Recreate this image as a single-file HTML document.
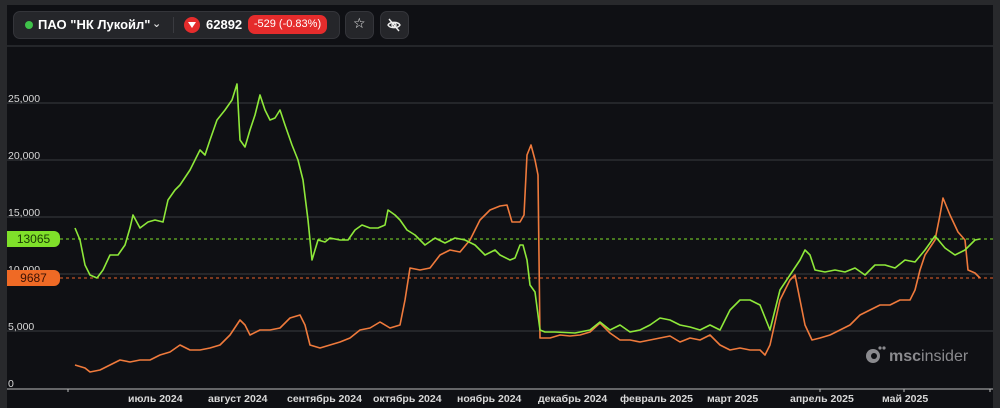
<!DOCTYPE html>
<html><head><meta charset="utf-8"><style>
html,body{margin:0;padding:0;background:#28292c;width:1000px;height:408px;overflow:hidden;font-family:"Liberation Sans","DejaVu Sans",sans-serif}
.panel{position:absolute;left:7px;top:5px;width:986px;height:403px;background:#0f1014}
.tb{position:absolute;top:11px;height:28px;background:#25262a;border:1px solid #34353a;border-radius:7px;box-sizing:border-box}
.lbl{position:absolute;left:7px;width:53px;height:16px;border-radius:0 6px 6px 0;font-size:12px;text-align:center;line-height:16px}
.ax{position:absolute;color:#d8d8d8;font-size:10.5px;font-weight:bold;top:393px}
.yl{position:absolute;left:8px;color:#d8d8d8;font-size:10.5px}
</style></head><body>
<div class="panel"></div>
<svg style="position:absolute;left:0;top:0" width="1000" height="408">
<g stroke="#2c2d31" stroke-width="1.5">
<line x1="7" x2="993" y1="46" y2="46"/><line x1="7" x2="993" y1="103" y2="103"/><line x1="7" x2="993" y1="160" y2="160"/><line x1="7" x2="993" y1="217" y2="217"/><line x1="7" x2="993" y1="274" y2="274"/><line x1="7" x2="993" y1="331" y2="331"/>
</g>
<line x1="7" x2="993" y1="389" y2="389" stroke="#bbb" stroke-width="1"/>
<g stroke="#bbb"><line x1="68" x2="68" y1="389" y2="392"/><line x1="990" x2="990" y1="389" y2="392"/><line x1="904" x2="904" y1="389" y2="392"/><line x1="820" x2="820" y1="389" y2="392"/></g>
<line x1="60" x2="993" y1="239" y2="239" stroke="#7fe02a" stroke-dasharray="3,3"/>
<line x1="60" x2="993" y1="278" y2="278" stroke="#e8622a" stroke-dasharray="3,3"/>
<polyline fill="none" stroke="#ef7a3c" stroke-width="1.6" stroke-linejoin="round" points="75,365 85,368 90,372 100,370 110,365 120,360 130,362 140,360 150,360 160,355 170,352 180,345 190,350 200,350 210,348 220,345 230,335 240,320 245,325 250,335 260,330 270,330 280,328 290,318 300,315 305,325 310,345 320,348 330,345 340,342 350,338 360,330 370,328 380,322 390,328 400,325 405,300 410,268 420,270 430,268 440,255 450,250 460,252 470,240 480,220 490,210 500,206 507,205 512,222 520,222 524,215 527,155 531,145 535,160 538,175 540,338 550,338 560,335 570,336 580,335 590,332 600,323 610,333 620,340 630,340 640,342 650,340 660,338 670,336 680,342 690,338 700,340 710,335 720,345 730,350 740,348 750,350 760,350 765,355 770,345 780,300 790,280 795,275 800,300 805,325 812,340 820,338 830,335 840,330 850,325 860,315 870,310 880,305 890,305 900,300 910,300 915,290 920,270 925,255 935,240 940,215 943,198 950,215 958,232 965,240 968,270 975,273 980,278"/>
<polyline fill="none" stroke="#8ee83a" stroke-width="1.6" stroke-linejoin="round" points="75,228 80,240 85,265 90,275 97,278 103,270 110,255 118,255 125,245 130,228 133,215 140,228 148,222 155,220 163,222 168,200 175,190 180,185 190,170 195,160 200,150 205,155 210,140 217,120 225,110 232,100 237,84 240,140 245,147 250,130 255,115 260,95 265,110 270,120 275,118 280,110 285,125 292,145 298,160 303,180 308,220 312,260 318,240 325,242 330,238 340,240 348,240 355,230 362,225 370,228 378,228 385,225 388,210 395,215 400,220 407,230 415,235 425,245 435,238 445,243 455,238 465,240 475,245 485,255 495,250 500,255 510,260 515,258 520,245 523,245 527,260 530,285 535,292 540,330 545,332 555,332 575,333 590,330 600,322 610,330 620,325 630,332 640,330 650,325 660,318 670,320 680,325 690,327 700,330 710,325 720,330 730,310 740,300 750,300 760,305 770,330 775,310 780,290 790,275 800,260 805,250 810,255 815,270 825,272 835,270 845,272 855,268 865,275 875,265 885,265 895,268 905,260 915,262 925,250 935,236 945,248 955,255 965,250 975,240 980,239"/>
<g fill="#8a8a8e"><circle cx="873" cy="356" r="7"/><circle cx="880" cy="348" r="1.6"/><circle cx="884" cy="348" r="1.6"/></g>
<circle cx="874" cy="356" r="3" fill="#0f1014"/>
<text x="889" y="361" fill="#8a8a8e" font-size="16" font-family="Liberation Sans"><tspan font-weight="bold">msc</tspan>insider</text>
</svg>
<div class="yl" style="top:93px">25,000</div>
<div class="yl" style="top:150px">20,000</div>
<div class="yl" style="top:207px">15,000</div>
<div class="yl" style="top:264px">10,000</div>
<div class="yl" style="top:321px">5,000</div>
<div class="yl" style="top:378px">0</div>
<div class="lbl" style="top:231px;background:#7fe02a;color:#1a3a05">13065</div>
<div class="lbl" style="top:270px;background:#ef6a25;color:#3a1205">9687</div>
<div class="ax" style="left:128px">июль 2024</div>
<div class="ax" style="left:208px">август 2024</div>
<div class="ax" style="left:287px">сентябрь 2024</div>
<div class="ax" style="left:373px">октябрь 2024</div>
<div class="ax" style="left:457px">ноябрь 2024</div>
<div class="ax" style="left:538px">декабрь 2024</div>
<div class="ax" style="left:620px">февраль 2025</div>
<div class="ax" style="left:707px">март 2025</div>
<div class="ax" style="left:790px">апрель 2025</div>
<div class="ax" style="left:882px">май 2025</div>
<div class="tb" style="left:13px;width:327px"></div>
<div style="position:absolute;left:25px;top:21px;width:8px;height:8px;border-radius:50%;background:#3fc24a"></div>
<div style="position:absolute;left:38px;top:17px;color:#fff;font-size:13px;font-weight:bold">ПАО "НК Лукойл"</div>
<div style="position:absolute;left:152px;top:17px;color:#ddd;font-size:11px;font-weight:bold">⌄</div>
<div style="position:absolute;left:173px;top:17px;width:1px;height:16px;background:#3a3b40"></div>
<div style="position:absolute;left:184px;top:17px;width:16px;height:16px;border-radius:50%;background:#e52c2c"></div>
<div style="position:absolute;left:188px;top:22px;width:0;height:0;border-left:4px solid transparent;border-right:4px solid transparent;border-top:6px solid #fff"></div>
<div style="position:absolute;left:206px;top:17px;color:#fff;font-size:13px;font-weight:bold">62892</div>
<div style="position:absolute;left:248px;top:15px;width:79px;height:19px;border-radius:7px;background:#e52c2c;color:#fff;font-size:11px;line-height:19px;text-align:center">-529 (-0.83%)</div>
<div class="tb" style="left:345px;width:29px"></div>
<div style="position:absolute;left:353px;top:15px;color:#eee;font-size:14px">☆</div>
<div class="tb" style="left:380px;width:29px"></div>
<svg style="position:absolute;left:386px;top:17px" width="16" height="16" viewBox="0 0 16 16" fill="none" stroke="#eee" stroke-width="1.4"><path d="M2 8c2-3.5 10-3.5 12 0c-2 3.5-10 3.5-12 0z"/><circle cx="8" cy="8" r="2"/><path d="M3 2l10 12"/></svg>
</body></html>
